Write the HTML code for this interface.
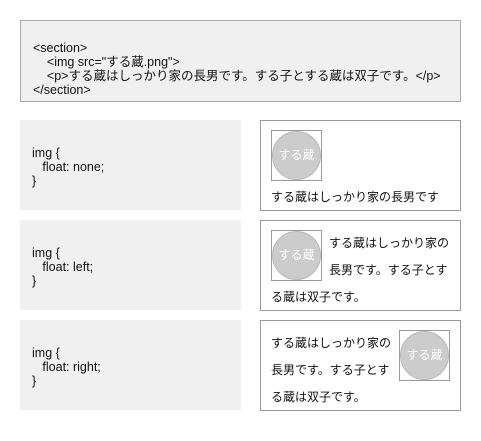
<!DOCTYPE html>
<html><head><meta charset="utf-8"><style>
*{margin:0;padding:0;box-sizing:border-box}
body{width:481px;height:441px;background:#fff;font-family:"Liberation Sans","Noto Sans CJK JP",sans-serif;color:#111;position:relative;overflow:hidden}
.top{position:absolute;left:20px;top:20px;width:441px;height:82px;background:#f0f0f0;border:1px solid #aaa;font-size:12.5px;line-height:14px;padding:20px 0 0 12px;white-space:pre}
.code{position:absolute;left:20px;width:221px;height:90px;background:#f0f0f0;font-size:12.5px;line-height:14px;padding:26px 0 0 12px;white-space:pre}
.box{position:absolute;left:260px;width:201px;height:91px;border:1px solid #999;font-size:12px;padding:9px 10px 0 10px}
.img{width:51px;height:51px;border:1px solid #999;position:relative}
.img::before{content:"";position:absolute;left:0;top:0;width:49px;height:49px;border-radius:50%;background:#ccc;border:1px solid #bbb;box-sizing:border-box}
.img span{position:absolute;left:0;top:0;width:49px;height:49px;line-height:49px;text-align:center;color:#fff;font-size:12px}
.box p{line-height:27px}
.fl{float:left;margin-right:7px}
.fr{float:right;margin-left:7px;margin-right:0}
</style></head><body>
<div class="top">&lt;section&gt;
    &lt;img src="する蔵.png"&gt;
    &lt;p&gt;する蔵はしっかり家の長男です。する子とする蔵は双子です。&lt;/p&gt;
&lt;/section&gt;</div>

<div class="code" style="top:120px">img {
   float: none;
}</div>
<div class="box" style="top:120px"><div class="img"><span>する蔵</span></div><p style="margin-top:3px">する蔵はしっかり家の長男です</p></div>

<div class="code" style="top:220px">img {
   float: left;
}</div>
<div class="box" style="top:220px"><div class="img fl"><span>する蔵</span></div><p>する蔵はしっかり家の長男です。する子とする蔵は双子です。</p></div>

<div class="code" style="top:320px">img {
   float: right;
}</div>
<div class="box" style="top:320px"><div class="img fr"><span>する蔵</span></div><p>する蔵はしっかり家の長男です。する子とする蔵は双子です。</p></div>
</body></html>
